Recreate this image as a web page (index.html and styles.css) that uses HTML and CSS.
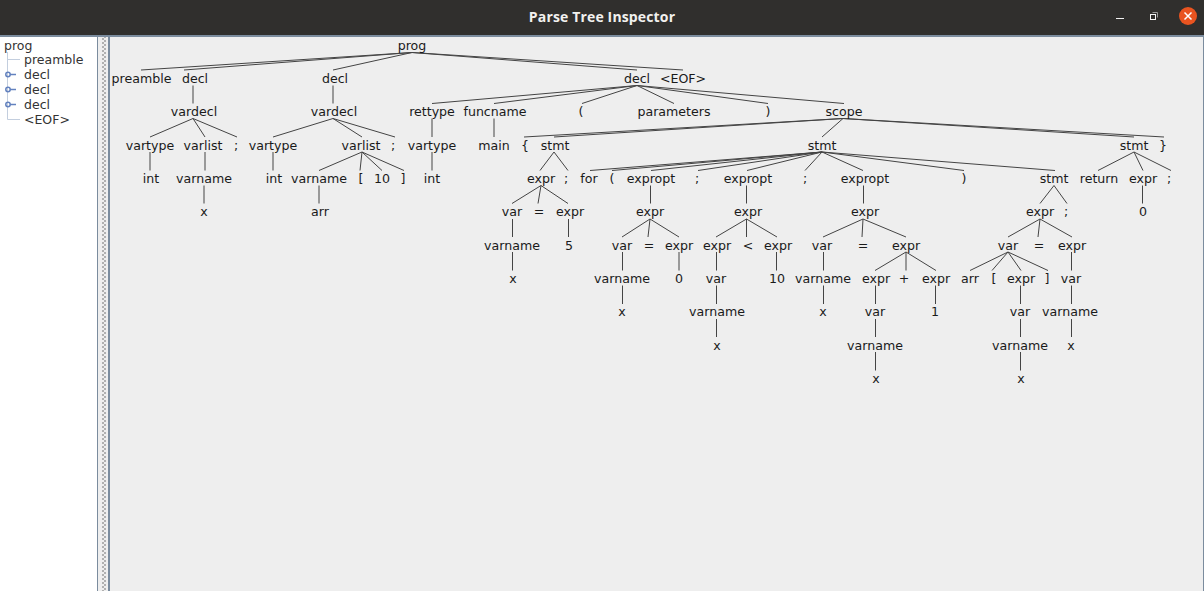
FILE: index.html
```html
<!DOCTYPE html>
<html lang="en">
<head>
    <meta charset="UTF-8">
    <title>Parse Tree Inspector</title>
    <link rel="stylesheet" href="styles.css">
</head>
<body>

    <!-- Window title bar -->
    <header class="titlebar">
        <h1 class="title">Parse Tree Inspector</h1>
        <div class="win-buttons">
            <svg class="win-icon" viewBox="0 0 16 16"><path class="win-min" d="M1 10.500H9"/></svg>
            <svg class="win-icon" viewBox="0 0 16 16"><path class="win-back" d="M4.500 4.500H9.500V9.500"/><rect class="win-front" x="2.500" y="6.500" width="5" height="5"/></svg>
            <svg class="win-close" viewBox="0 0 18 18"><circle cx="9" cy="9" r="9"/><path d="M5.500 5.500L12.500 12.500M12.500 5.500L5.500 12.500"/></svg>
        </div>
    </header>

    <main class="split">

        <!-- Outline on the left -->
        <ul class="outline">
            <li class="outline-row outline-root">prog</li>
            <li class="outline-row">
                <svg class="guide" viewBox="0 0 20 15"><path d="M7.500 0V15M8 7.500H20"/></svg>preamble
            </li>
            <li class="outline-row">
                <svg class="guide" viewBox="0 0 20 15"><path d="M7.500 0V15"/><path class="handle" d="M10 7.500H16"/><circle class="handle" cx="8" cy="7.500" r="2.200"/></svg>decl
            </li>
            <li class="outline-row">
                <svg class="guide" viewBox="0 0 20 15"><path d="M7.500 0V15"/><path class="handle" d="M10 7.500H16"/><circle class="handle" cx="8" cy="7.500" r="2.200"/></svg>decl
            </li>
            <li class="outline-row">
                <svg class="guide" viewBox="0 0 20 15"><path d="M7.500 0V15"/><path class="handle" d="M10 7.500H16"/><circle class="handle" cx="8" cy="7.500" r="2.200"/></svg>decl
            </li>
            <li class="outline-row">
                <svg class="guide" viewBox="0 0 20 15"><path d="M7.500 0V7.500H20"/></svg>&lt;EOF&gt;
            </li>
        </ul>

        <div class="divider"></div>

        <!-- Tree canvas, svg coordinates are the window's minus the canvas corner (110,37) -->
        <section class="canvas">
            <svg class="tree" width="1093" height="554" viewBox="110 37 1093 554">
                <g class="edges">
                    <path d="M412 52.500L141 70M412 52.500L184 70M412 52.500L333 70M412 52.500L637 70M412 52.500L683 70"/>
                    <path d="M193 85.500V103.500M333 85.500V103.500M637 85.500L432 103.500M637 85.500L494 103.500M637 85.500L582 103.500M637 85.500L674 103.500M637 85.500L768 103.500M637 85.500L844 103.500"/>
                    <path d="M193 118.500L150 137M193 118.500L205 137M193 118.500L237 137M333 118.500L273 137M333 118.500L362 137M333 118.500L395 137M432 118.500V137M494 118.500V137M843 118.500L524 137M843 118.500L554 137M843 118.500L822 137M843 118.500L1134 137M843 118.500L1164 137"/>
                    <path d="M150 152V170.500M205 152V170.500M273 152V170.500M362 152L319 170.500M362 152L360 170.500M362 152L382 170.500M362 152L404 170.500M432 152V170.500M554 152L540 170.500M554 152L568 170.500M822 152L590 170.500M822 152L612 170.500M822 152L651 170.500M822 152L698 170.500M822 152L747 170.500M822 152L805 170.500M822 152L863 170.500M822 152L964 170.500M822 152L1055 170.500M1134 152L1098 170.500M1134 152L1143 170.500M1134 152L1171 170.500"/>
                    <path d="M204 185.500V203.500M319 185.500V203.500M541 185.500L512 203.500M541 185.500L538 203.500M541 185.500L568 203.500M650.500 185.500V203.500M746.500 185.500V203.500M863.500 185.500V203.500M1054 185.500L1040 203.500M1054 185.500L1067 203.500M1142.500 185.500V203.500"/>
                    <path d="M512.500 219V237M568.500 219V237M650 219L622 237M650 219L648 237M650 219L679 237M746.500 219L716 237M746.500 219V237M746.500 219L777 237M863 219L823 237M863 219L862 237M863 219L906 237M1040 219L1008 237M1040 219L1038 237M1040 219L1072 237"/>
                    <path d="M512.500 252V270.500M622.500 252V270.500M679 252V270.500M716.500 252V270.500M776.500 252V270.500M823.500 252V270.500M906 252L875 270.500M906 252V270.500M906 252L936 270.500M1008 252L970 270.500M1008 252L992 270.500M1008 252L1021 270.500M1008 252L1048 270.500M1071.500 252V270.500"/>
                    <path d="M622.500 285.500V304M716.500 285.500V304M823.500 285.500V304M875.500 285.500V304M935.500 285.500V304M1020.500 285.500V304M1071.500 285.500V304"/>
                    <path d="M716.500 319V337M875.500 319V337M1020.500 319V337M1071.500 319V337"/>
                    <path d="M875.500 352V370.500M1020.500 352V370.500"/>
                </g>
                <g class="labels">
                    <text x="412" y="50">prog</text>

                    <text x="141.500" y="83">preamble</text>
                    <text x="195" y="83">decl</text>
                    <text x="335" y="83">decl</text>
                    <text x="637" y="83">decl</text>
                    <text x="683" y="83">&lt;EOF&gt;</text>

                    <text x="194" y="116">vardecl</text>
                    <text x="334" y="116">vardecl</text>
                    <text x="432" y="116">rettype</text>
                    <text x="495" y="116">funcname</text>
                    <text x="581" y="116">(</text>
                    <text x="674" y="116">parameters</text>
                    <text x="768" y="116">)</text>
                    <text x="844" y="116">scope</text>

                    <text x="150" y="150">vartype</text>
                    <text x="203" y="150">varlist</text>
                    <text x="236" y="150">;</text>
                    <text x="273" y="150">vartype</text>
                    <text x="361" y="150">varlist</text>
                    <text x="393" y="150">;</text>
                    <text x="432" y="150">vartype</text>
                    <text x="494" y="150">main</text>
                    <text x="525" y="150">{</text>
                    <text x="555" y="150">stmt</text>
                    <text x="822" y="150">stmt</text>
                    <text x="1134" y="150">stmt</text>
                    <text x="1163" y="150">}</text>

                    <text x="151" y="183">int</text>
                    <text x="204" y="183">varname</text>
                    <text x="274" y="183">int</text>
                    <text x="319" y="183">varname</text>
                    <text x="361" y="183">[</text>
                    <text x="382" y="183">10</text>
                    <text x="403" y="183">]</text>
                    <text x="432" y="183">int</text>
                    <text x="541" y="183">expr</text>
                    <text x="566" y="183">;</text>
                    <text x="589" y="183">for</text>
                    <text x="612" y="183">(</text>
                    <text x="651" y="183">expropt</text>
                    <text x="697" y="183">;</text>
                    <text x="748" y="183">expropt</text>
                    <text x="805" y="183">;</text>
                    <text x="865" y="183">expropt</text>
                    <text x="964" y="183">)</text>
                    <text x="1054" y="183">stmt</text>
                    <text x="1099" y="183">return</text>
                    <text x="1143" y="183">expr</text>
                    <text x="1169" y="183">;</text>

                    <text x="204" y="216">x</text>
                    <text x="320" y="216">arr</text>
                    <text x="512" y="216">var</text>
                    <text x="539" y="216">=</text>
                    <text x="570" y="216">expr</text>
                    <text x="650" y="216">expr</text>
                    <text x="748" y="216">expr</text>
                    <text x="865" y="216">expr</text>
                    <text x="1040" y="216">expr</text>
                    <text x="1066" y="216">;</text>
                    <text x="1143" y="216">0</text>

                    <text x="512" y="250">varname</text>
                    <text x="569" y="250">5</text>
                    <text x="622" y="250">var</text>
                    <text x="649" y="250">=</text>
                    <text x="679" y="250">expr</text>
                    <text x="717" y="250">expr</text>
                    <text x="748" y="250">&lt;</text>
                    <text x="778" y="250">expr</text>
                    <text x="822" y="250">var</text>
                    <text x="863" y="250">=</text>
                    <text x="906" y="250">expr</text>
                    <text x="1008" y="250">var</text>
                    <text x="1039" y="250">=</text>
                    <text x="1072" y="250">expr</text>

                    <text x="513" y="283">x</text>
                    <text x="622" y="283">varname</text>
                    <text x="679" y="283">0</text>
                    <text x="716" y="283">var</text>
                    <text x="777" y="283">10</text>
                    <text x="823" y="283">varname</text>
                    <text x="876" y="283">expr</text>
                    <text x="904" y="283">+</text>
                    <text x="936" y="283">expr</text>
                    <text x="970" y="283">arr</text>
                    <text x="994" y="283">[</text>
                    <text x="1021" y="283">expr</text>
                    <text x="1047" y="283">]</text>
                    <text x="1071" y="283">var</text>

                    <text x="622" y="316">x</text>
                    <text x="717" y="316">varname</text>
                    <text x="823" y="316">x</text>
                    <text x="875" y="316">var</text>
                    <text x="935" y="316">1</text>
                    <text x="1020" y="316">var</text>
                    <text x="1070" y="316">varname</text>

                    <text x="717" y="350">x</text>
                    <text x="875" y="350">varname</text>
                    <text x="1020" y="350">varname</text>
                    <text x="1071" y="350">x</text>

                    <text x="876" y="383">x</text>
                    <text x="1021" y="383">x</text>
                </g>
            </svg>
        </section>
    </main>

</body>
</html>
```

FILE: styles.css
```css
html, body {
    height: 100%;
}

body {
    margin: 0;
    display: flex;
    flex-direction: column;
    font-family: "DejaVu Sans", sans-serif;
    background-color: #eeeeee;
    overflow: hidden;
}

.titlebar {
    position: relative;
    flex: none;
    height: 35px;
    box-sizing: border-box;
    padding-bottom: 2px;
    background-color: #302f2d;
    display: flex;
    align-items: center;
    justify-content: center;
}

.title {
    margin: 0;
    font-family: "Open Sans", sans-serif;
    font-size: 14px;
    font-weight: 700;
    letter-spacing: 0.15px;
    color: #f2f1ef;
}

/* window buttons lie over the bar, the title stays centred */
.win-buttons {
    position: absolute;
    right: 7px;
    top: 7px;
    display: flex;
    align-items: center;
    gap: 17px;
}

.win-icon {
    width: 16px;
    height: 16px;
    fill: none;
}

.win-min {
    stroke: #f2f2f2;
    stroke-width: 1;
}

.win-back {
    stroke: #9a9a9a;
}

.win-front {
    stroke: #f4f4f4;
}

.win-close {
    width: 18px;
    height: 18px;
    margin-left: -2px;
}

.win-close circle {
    fill: #e95420;
}

.win-close path {
    stroke: #ffffff;
    stroke-width: 1.500;
    fill: none;
}

.split {
    flex: 1;
    min-height: 0;
    display: flex;
    border-top: 2px solid #7b8c9e;
}

.outline {
    flex: none;
    width: 97px;
    margin: 0;
    padding: 1px 0 0 0;
    list-style: none;
    background-color: #ffffff;
    color: #333333;
    font-size: 12.500px;
    box-sizing: border-box;
}

.outline-row {
    height: 15px;
    line-height: 15px;
    display: flex;
    align-items: center;
    padding-left: 4px;
    white-space: nowrap;
}

.outline-root {
    height: 14px;
}

.guide {
    flex: none;
    width: 20px;
    height: 15px;
    margin-left: -4px;
    margin-right: 4px;
    fill: none;
    stroke: #c3cede;
}

.guide .handle {
    stroke: #6382bf;
    stroke-width: 1.500;
}

.divider {
    flex: none;
    width: 11px;
    box-sizing: border-box;
    border-left: 1px solid #7b8c9e;
    background-color: #eeeeee;
    background-image:
        radial-gradient(circle, #b0b0b0 0.800px, transparent 1px),
        radial-gradient(circle, #b0b0b0 0.800px, transparent 1px);
    background-size: 2px 4px;
    background-position: 4px 0, 6px 2px;
    background-repeat: repeat-y;
}

.canvas {
    flex: 1;
    min-width: 0;
    border-left: 2px solid #7b8c9e;
    border-right: 1px solid #7b8c9e;
    background-color: #eeeeee;
    overflow: hidden;
}

.tree {
    display: block;
}

.edges path {
    fill: none;
    stroke: #444444;
    stroke-width: 1;
}

.labels text {
    font-size: 12.600px;
    fill: #1a1a1a;
    text-anchor: middle;
}
```
